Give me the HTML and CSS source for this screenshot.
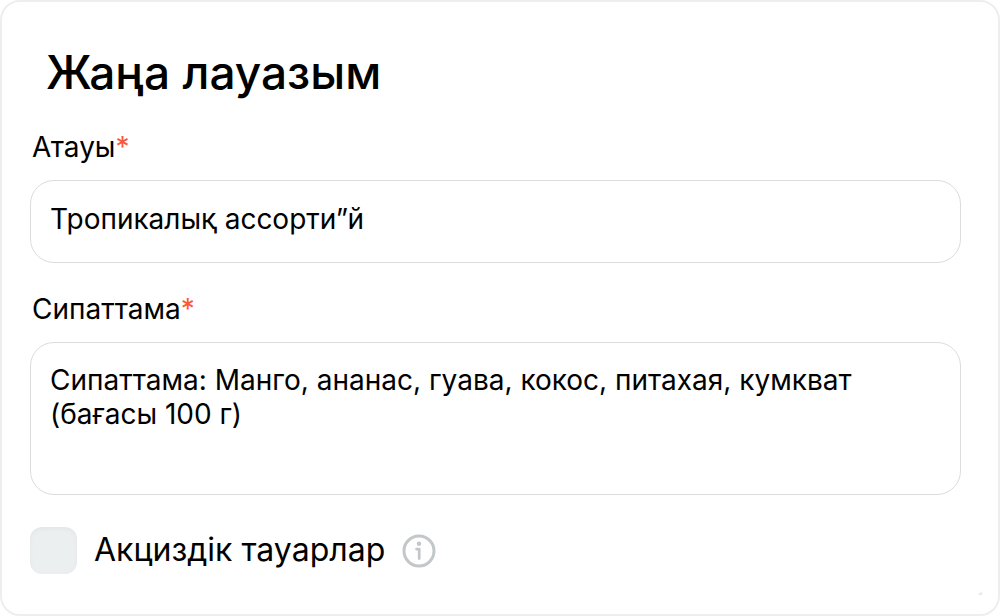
FILE: index.html
```
<!DOCTYPE html>
<html lang="kk">
<head>
    <meta charset="UTF-8">
    <meta name="viewport" content="width=device-width, initial-scale=1.0">
    <title>Жаңа лауазым</title>
    <link rel="stylesheet" href="styles.css">
</head>
<body>
    <form class="card">
        <h1 class="title">Жаңа лауазым</h1>

        <div class="field">
            <label class="label" for="name">Атауы<span class="required">*</span></label>
            <input class="control" type="text" id="name" value="Тропикалық ассорти”й">
        </div>

        <div class="field">
            <label class="label" for="description">Сипаттама<span class="required">*</span></label>
            <textarea class="control control-area" id="description">Сипаттама: Манго, ананас, гуава, кокос, питахая, кумкват (бағасы 100 г)</textarea>
        </div>

        <div class="check-row">
            <input class="checkbox" type="checkbox" id="excise">
            <label class="check-label" for="excise">Акциздік тауарлар</label>
            <button class="info" type="button" aria-label="Анықтама">
                <svg width="34" height="34" viewBox="0 0 34 34" fill="none" stroke="#c3c7ca">
                    <circle cx="17" cy="17" r="15" stroke-width="3"/>
                    <circle cx="17" cy="9.7" r="2.2" fill="#c3c7ca" stroke="none"/>
                    <path d="M14.6 15.2H17.2V24.6" stroke-width="2.8" stroke-linecap="round" stroke-linejoin="round"/>
                </svg>
            </button>
        </div>

        <svg class="corner" width="4" height="4" viewBox="0 0 4 4">
            <path d="M4 0V4H0Z" fill="#e4eaec"/>
        </svg>
    </form>
</body>
</html>
```
FILE: styles.css
```
body {
    margin: 0;
    background-color: #fff;
    color: #000;
    font-family: Inter, sans-serif;
}

.card {
    position: relative;
    box-sizing: border-box;
    min-height: 100vh;
    padding: 42px 37px 40px 28px;
    border: 2px solid #eee;
    border-radius: 20px;
    background-color: #fff;
}

.title {
    margin: 0 0 30px;
    padding-left: 16px;
    font-size: 46px;
    line-height: 56px;
    font-weight: 500;
}

.field {
    display: flex;
    flex-direction: column;
    gap: 16px;
    margin-bottom: 29px;
}

.label {
    padding-left: 2px;
    font-size: 28px;
    line-height: 34px;
}

.required {
    color: #fb573b;
}

.control {
    box-sizing: border-box;
    width: 100%;
    height: 83px;
    margin: 0;
    padding: 20px 19px 26px;
    border: 1px solid #dcdcdc;
    border-radius: 24px;
    outline: none;
    background-color: #fff;
    color: #000;
    font-family: inherit;
    font-size: 28px;
    line-height: 34px;
}

.control-area {
    height: 153px;
    resize: none;
    overflow: hidden;
}

.check-row {
    display: flex;
    align-items: center;
    margin-top: 32px;
}

.checkbox {
    appearance: none;
    width: 47px;
    height: 47px;
    margin: 0 17px 0 0;
    border-radius: 12px;
    background-color: #ebeff0;
    box-shadow: inset 0 2px 5px rgba(0, 0, 0, 0.04);
}

.checkbox:checked {
    background-color: #c3c7ca;
}

.check-label {
    padding-bottom: 2px;
    font-size: 32px;
    line-height: 40px;
}

.info {
    display: flex;
    margin-left: 17px;
    padding: 0;
    border: none;
    background: none;
    cursor: pointer;
}

/* Small mark in the bottom right corner */
.corner {
    position: absolute;
    right: 16px;
    bottom: 19px;
}
```
